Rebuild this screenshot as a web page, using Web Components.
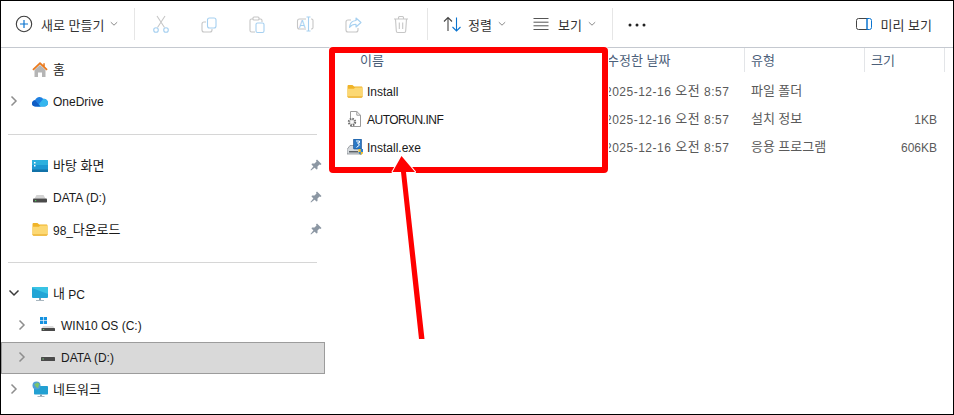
<!DOCTYPE html>
<html lang="ko">
<head>
<meta charset="utf-8">
<title>Explorer</title>
<style>
  html, body { margin: 0; padding: 0; background: #fff; }
  body { font: 12px "Liberation Sans", "Noto Sans CJK KR", sans-serif; color: #1a1a1a; }
</style>
</head>
<body>
<explorer-window>
  <explorer-toolbar slot="toolbar">
    <tool-button icon="plus" chevron style="width:133px;--pl:11px;--gap:5px"><ko-text>새로 만들기</ko-text></tool-button>
    <tool-sep style="margin-right:2px"></tool-sep>
    <tool-button icon="cut" style="--pl:12px;--pr:12px"></tool-button>
    <tool-button icon="copy" style="--pl:12px;--pr:12px"></tool-button>
    <tool-button icon="paste" style="--pl:12px;--pr:12px"></tool-button>
    <tool-button icon="rename" style="--pl:12px;--pr:12px"></tool-button>
    <tool-button icon="share" style="--pl:12px;--pr:12px"></tool-button>
    <tool-button icon="trash" style="--pl:12px;--pr:12px"></tool-button>
    <tool-sep style="margin-left:2px"></tool-sep>
    <tool-button icon="sort" chevron style="--pl:12px;--gap:4px"><ko-text>정렬</ko-text></tool-button>
    <tool-button icon="view" chevron style="--pl:23px;--pr:16px;--gap:5px"><ko-text>보기</ko-text></tool-button>
    <tool-sep></tool-sep>
    <tool-button icon="dots" style="--pl:12px"></tool-button>
    <tool-button icon="preview" style="margin-left:auto;--gap:9px;--pr:21px"><ko-text>미리 보기</ko-text></tool-button>
  </explorer-toolbar>

  <nav-pane slot="nav">
    <nav-item icon="home"><ko-text>홈</ko-text></nav-item>
    <nav-item icon="onedrive" arrow="right">OneDrive</nav-item>
    <nav-divider></nav-divider>
    <nav-item icon="desktop" pin><ko-text>바탕 화면</ko-text></nav-item>
    <nav-item icon="disk" pin>DATA (D:)</nav-item>
    <nav-item icon="folder" pin>98_<ko-text style="margin-left:-4px">다운로드</ko-text></nav-item>
    <nav-divider></nav-divider>
    <nav-item icon="pc" arrow="down"><ko-text>내</ko-text> PC</nav-item>
    <nav-item icon="windisk" arrow="right" level="1">WIN10 OS (C:)</nav-item>
    <nav-item icon="disk2" arrow="right" level="1" selected>DATA (D:)</nav-item>
    <nav-item icon="network" arrow="right"><ko-text>네트워크</ko-text></nav-item>
  </nav-pane>

  <file-list slot="files">
    <file-row icon="folder" name="Install" date="2025-12-16 오전 8:57" type="파일 폴더"></file-row>
    <file-row icon="inf" name="AUTORUN.INF" date="2025-12-16 오전 8:57" type="설치 정보" size="1KB" style="--track:-.5px"></file-row>
    <file-row icon="exe" name="Install.exe" date="2025-12-16 오전 8:57" type="응용 프로그램" size="606KB"></file-row>
  </file-list>

  <callout-mark slot="overlay"></callout-mark>
</explorer-window>

<script>
// every icon drawn on a 16 or 24 unit box
const svg16 = (body) => `<svg width="16" height="16" viewBox="0 0 16 16" fill="none">${body}</svg>`;
const svg24 = (body) => `<svg width="24" height="24" viewBox="0 0 24 24" fill="none">${body}</svg>`;
const G = '#c6c6c6';
const B = '#a6d0f0';

const FOLDER = `
  <path d="M.5 3.2c0-.7.5-1.2 1.2-1.2h3.7l1.8 1.6h7.1c.7 0 1.2.5 1.2 1.2v8.500c0 .7-.5 1.2-1.2 1.2H1.7c-.7 0-1.2-.5-1.2-1.2z" fill="#f0b429"/>
  <path d="M.5 5.8l6.3-.1 1.6-1.2h6c.7 0 1.1.5 1.1 1.1v7.900c0 .7-.5 1.2-1.2 1.2H1.7c-.7 0-1.2-.5-1.2-1.2z" fill="#fcd873"/>
  <path d="M.5 13.2h15v.3c0 .7-.5 1.2-1.2 1.2H1.7c-.7 0-1.2-.5-1.2-1.2z" fill="#edb63e"/>`;

const ICONS = {
  plus: svg24(`<circle cx="12" cy="12" r="7.700" stroke="#3c3c3c" stroke-width="1.100"/><path d="M12 8v8M8 12h8" stroke="#0a74d0" stroke-width="1.200"/>`),
  cut: svg24(`<path d="M8.500 15.500 16 4M15.500 15.500 8 4" stroke="${G}" stroke-width="1.100"/><circle cx="7" cy="18" r="2.300" stroke="${B}" stroke-width="1.100"/><circle cx="17" cy="18" r="2.300" stroke="${B}" stroke-width="1.100"/>`),
  copy: svg24(`<path d="M9 10H7a2 2 0 0 0-2 2v6a2 2 0 0 0 2 2h6a2 2 0 0 0 2-2v-1" stroke="${G}" stroke-width="1.100"/><rect x="10.500" y="6" width="8.500" height="10" rx="2" stroke="${B}" stroke-width="1.100"/>`),
  paste: svg24(`<path d="M8 7H6.500A1.500 1.500 0 0 0 5 8.500v10A1.500 1.500 0 0 0 6.500 20H10M14 7h1.500A1.500 1.500 0 0 1 17 8.500V10" stroke="${G}" stroke-width="1.100"/><rect x="8" y="5" width="6" height="3" rx="1" stroke="${G}" stroke-width="1.100"/><rect x="11" y="11" width="8" height="9.500" rx="1.500" stroke="${B}" stroke-width="1.100"/>`),
  rename: svg24(`<path d="M13 7H6.500A2 2 0 0 0 4.500 9v6a2 2 0 0 0 2 2H13M18 7h.5a1.500 1.500 0 0 1 1.500 1.500v7a1.500 1.500 0 0 1-1.500 1.500H18" stroke="${G}" stroke-width="1.100"/><path d="M15.500 5.500V18.500M13.500 5h4M13.500 19h4" stroke="${B}" stroke-width="1.100"/><text x="9" y="15.500" font-size="10" fill="${B}" text-anchor="middle" font-family="Liberation Sans">A</text>`),
  share: svg24(`<path d="M10 8H7a2 2 0 0 0-2 2v8a2 2 0 0 0 2 2h8a2 2 0 0 0 2-2v-2" stroke="${G}" stroke-width="1.100"/><path d="M15 6l5 4.500-5 4.500v-2.700c-3 0-5 1-6.500 3 .3-4 2.500-6.500 6.500-6.800z" stroke="${B}" stroke-width="1.100" stroke-linejoin="round"/>`),
  trash: svg24(`<path d="M5 7h14M9.500 7V5.500c0-.6.4-1 1-1h3c.6 0 1 .4 1 1V7M6.500 7l.8 12a1.500 1.500 0 0 0 1.500 1.500h6.400a1.500 1.500 0 0 0 1.500-1.500l.8-12M10.300 10.500v6.500M13.700 10.500v6.500" stroke="${G}" stroke-width="1.100"/>`),
  sort: svg24(`<path d="M8 19V5.500M4 9.500l4-4 4 4" stroke="#444" stroke-width="1.100"/><path d="M16.500 5.500V19M12.500 15l4 4 4-4" stroke="#0a74d0" stroke-width="1.100"/>`),
  view: svg24(`<path d="M4.500 6.500h15M4.500 10.200h15M4.500 13.800h15M4.500 17.500h15" stroke="#555" stroke-width="1"/>`),
  dots: svg24(`<circle cx="5" cy="13" r="1.500" fill="#222"/><circle cx="12" cy="13" r="1.500" fill="#222"/><circle cx="19" cy="13" r="1.500" fill="#222"/>`),
  preview: svg16(`<path d="M11 2.500H2.500a2 2 0 0 0-2 2v7a2 2 0 0 0 2 2H11" stroke="#444" stroke-width="1"/><path d="M11 2.500h2.500a2 2 0 0 1 2 2v7a2 2 0 0 1-2 2H11zM11 2.500v11" stroke="#0a74d0" stroke-width="1"/>`),

  home: svg16(`<g transform="translate(0 1)"><path d="M2.500 8 8 3l5.500 5v7H10v-4.500H6V15H2.500z" fill="#b5b5b5"/><path d="M8 0 .3 7.200l1.300 1.200L8 2.600l6.400 5.800 1.300-1.200L12.800 4.500V1.300h-1.500v1.800z" fill="#ea7a1e"/></g>`),
  onedrive: svg16(`<path d="M3.600 13.500C1.500 13.500 0 12.100 0 10.400 0 8.700 1.400 7.400 3 7.300 3.700 5.300 5.500 4 7.500 4c1.500 0 2.800.7 3.600 1.900 2.700-.3 4.900 1.600 4.900 4 0 2-1.600 3.600-3.700 3.600z" fill="#1f7fe0"/><path d="M5 13.500 11.100 5.900c2.700-.3 4.900 1.600 4.900 4 0 2-1.600 3.600-3.700 3.600z" fill="#35b6ee"/><path d="M0 10.400C0 12.100 1.500 13.500 3.600 13.500h5L5 9.500 3 7.300C1.400 7.400 0 8.700 0 10.400z" fill="#0f5cc4"/>`),
  desktop: svg16(`<rect y="3" width="16" height="12" rx="1" fill="#1c97d2"/><rect y="3" width="16" height="5" fill="#2cb0de"/><rect y="12.500" width="16" height="2.500" fill="#1172a8"/><rect x="2" y="5" width="1.500" height="1.500" fill="#fff"/><rect x="2" y="8" width="1.500" height="1.500" fill="#fff"/>`),
  disk: svg16(`<path d="M2.500 9.500 4.500 6h7l2 3.500z" fill="#d3d3d3"/><rect x="1" y="9.500" width="14" height="4" rx=".8" fill="#4a4a4a"/><rect x="3" y="11" width="1.200" height="1.200" fill="#4fd05a"/>`),
  disk2: svg16(`<path d="M2.500 8 5 6h6l2.500 2z" fill="#e2e2e2"/><rect x="1" y="8" width="14" height="4" rx=".6" fill="#4a4a4a"/><rect x="2.500" y="9.400" width="1.200" height="1.200" fill="#7fd07f"/>`),
  folder: svg16(FOLDER),
  pc: svg16(`<rect y="2" width="16" height="11" rx="1" fill="#22a5d6"/><path d="M0 3a1 1 0 0 1 1-1h14a1 1 0 0 1 1 1v6z" fill="#38c3e4"/><rect x="7" y="13" width="2" height="2" fill="#8aa0ad"/><rect x="4" y="15" width="8" height="1" fill="#a9b7c0"/>`),
  windisk: svg16(`<rect x="0" y="0" width="3.200" height="3.200" fill="#1592e0"/><rect x="3.800" y="0" width="3.200" height="3.200" fill="#1592e0"/><rect x="0" y="3.800" width="3.200" height="3.200" fill="#1592e0"/><rect x="3.800" y="3.800" width="3.200" height="3.200" fill="#1592e0"/><path d="M3 9h10l1.500 2H2z" fill="#dcdcdc"/><rect x="1.500" y="11" width="13.500" height="3" rx=".6" fill="#4a4a4a"/><rect x="3" y="12" width="1.200" height="1" fill="#6fd06f"/>`),
  network: svg16(`<rect x="2" y="5" width="14" height="8.500" rx=".8" fill="#22a0d2"/><rect x="8" y="13.500" width="2" height="1.500" fill="#8aa0ad"/><rect x="5.500" y="15" width="7" height="1" fill="#a9b7c0"/><circle cx="4.500" cy="4.500" r="4" fill="#4f9fd8"/><path d="M2 2.500c1.500.5 2.500 0 3-1.300 1 .8 2.300 1.500 3 1.800-1 .7-1.500 2-1.800 4-1.500-.2-3-1.500-4.200-4.500z" fill="#7cc46c"/>`),

  inf: svg16(`<path d="M3.500.5h6.300l3.700 3.700v11.300h-10z" fill="#fff" stroke="#9a9a9a"/><path d="M9.800.5v3.700h3.700" stroke="#9a9a9a"/><circle cx="5" cy="11" r="3.200" fill="#e6e6e6" stroke="#6f6f6f" stroke-width="2" stroke-dasharray="1.500 1"/><circle cx="5" cy="11" r="1.100" fill="#fff"/>`),
  exe: svg16(`<path d="M0 10.500 3 6.500h9l3 4v4.500H0z" fill="#d6dade" stroke="#7d8388" stroke-width=".7"/><rect x="2" y="12" width="9" height="1.500" fill="#5c6267"/><rect x="6.500" y="0" width="8" height="10" rx=".6" fill="#2b78c4" stroke="#174f8f" stroke-width=".6"/><path d="M9 2h3.500v1.800h-2l2 2.300L9.500 8.500" stroke="#fff" stroke-width="1"/><path d="M11.500 10h4.500v3.200c0 1.200-1.200 2.100-2.250 2.600-1-.5-2.250-1.400-2.250-2.600z" fill="#f5c021"/><path d="M13.750 10H16v3H13.750zM11.500 13h2.250v2.800c-1-.5-2.250-1.400-2.250-2.800z" fill="#2c7fd4"/>`)
};

const CHEVRON_DOWN = `<svg width="8" height="6" viewBox="0 0 8 6" fill="none"><path d="M.8 1.200 4 4.200l3.200-3" stroke="#8a8a8a" stroke-width="1"/></svg>`;
const HANGUL = /[가-힣]+/g;
const ko = (str) => str.replace(HANGUL, (m) => `<ko-text>${m}</ko-text>`);

// hangul run: the CJK font is set a size up to get the 12px advance of the original
class KoText extends HTMLElement {
  constructor() {
    super();
    this.attachShadow({ mode: 'open' }).innerHTML = `
      <style>
        :host { font: 13px/1 "Noto Sans CJK KR", sans-serif; vertical-align: 1px; }
      </style>
      <slot></slot>`;
  }
}

class ExplorerWindow extends HTMLElement {
  constructor() {
    super();
    this.attachShadow({ mode: 'open' }).innerHTML = `
      <style>
        :host {
          display: block;
          position: relative;
          box-sizing: border-box;
          width: 954px;
          height: 415px;
          border: 1px solid #000;
          background: #fff;
          overflow: hidden;
        }
        .body { display: grid; grid-template-columns: 324px 1fr; height: 367px; }
      </style>
      <slot name="toolbar"></slot>
      <div class="body">
        <slot name="nav"></slot>
        <slot name="files"></slot>
      </div>
      <slot name="overlay"></slot>`;
  }
}

class ExplorerToolbar extends HTMLElement {
  constructor() {
    super();
    this.attachShadow({ mode: 'open' }).innerHTML = `
      <style>
        :host {
          display: flex;
          align-items: center;
          box-sizing: border-box;
          height: 47px;
          border-bottom: 1px solid #c5c9d0;
        }
      </style>
      <slot></slot>`;
  }
}

class ToolButton extends HTMLElement {
  constructor() {
    super();
    const chev = this.hasAttribute('chevron') ? `<span class="chev">${CHEVRON_DOWN}</span>` : '';
    this.attachShadow({ mode: 'open' }).innerHTML = `
      <style>
        :host {
          display: flex;
          align-items: center;
          box-sizing: border-box;
          height: 46px;
          padding: 0 var(--pr, 0) 0 var(--pl, 0);
          color: #333;
          white-space: nowrap;
        }
        .ico { display: flex; }
        .label { margin-left: var(--gap, 0); padding-top: 4px; line-height: 16px; }
        .chev { display: flex; margin-left: 6px; }
      </style>
      <span class="ico">${ICONS[this.getAttribute('icon')]}</span>
      <span class="label"><slot></slot></span>
      ${chev}`;
  }
}

class ToolSep extends HTMLElement {
  constructor() {
    super();
    this.attachShadow({ mode: 'open' }).innerHTML = `
      <style>
        :host { display: block; flex: none; width: 1px; height: 32px; background: #e6e6e6; }
      </style>`;
  }
}

class NavPane extends HTMLElement {
  constructor() {
    super();
    this.attachShadow({ mode: 'open' }).innerHTML = `
      <style>
        :host { display: flex; flex-direction: column; padding-top: 5px; }
      </style>
      <slot></slot>`;
  }
}

class NavDivider extends HTMLElement {
  constructor() {
    super();
    this.attachShadow({ mode: 'open' }).innerHTML = `
      <style>
        :host { display: block; height: 32px; box-sizing: border-box; padding: 17px 8px 0 7px; }
        div { height: 1px; background: #d6d6d6; }
      </style>
      <div></div>`;
  }
}

class NavItem extends HTMLElement {
  constructor() {
    super();
    const arrow = this.getAttribute('arrow');
    const level = Number(this.getAttribute('level') || 0);
    let chev = '';
    if (arrow === 'right') {
      chev = `<svg width="8" height="12" viewBox="0 0 8 12" fill="none"><path d="M1.500 1.500 6 6l-4.500 4.500" stroke="#8e8e8e" stroke-width="1.500"/></svg>`;
    } else if (arrow === 'down') {
      chev = `<svg width="12" height="8" viewBox="0 0 12 8" fill="none"><path d="M1.500 1.500 6 6l4.500-4.500" stroke="#3a3a3a" stroke-width="1.500"/></svg>`;
    }
    const pin = this.hasAttribute('pin')
      ? `<svg class="pin" width="12" height="12" viewBox="0 0 12 12"><path d="M7 .5 11.500 5 10.500 6 9.500 5.500 7.500 7.500 7.500 10 6.500 10.500 1.500 5.500 2 4.500 4.500 4.500 6.500 2.500 6 1.500zM3.500 7.200 4.800 8.500 1 11.500.5 11z" fill="#8c97a3"/></svg>`
      : '';
    this.attachShadow({ mode: 'open' }).innerHTML = `
      <style>
        :host {
          display: flex;
          align-items: center;
          box-sizing: border-box;
          height: 32px;
          padding-left: ${5 + level * 8}px;
          font: 12px "Liberation Sans", "Noto Sans CJK KR", sans-serif;
          color: #1a1a1a;
          white-space: nowrap;
        }
        :host([selected]) {
          background: #d9d9d9;
          outline: 1px solid #9c9c9c;
          outline-offset: -1px;
          margin: 1px 0 -1px;
          padding-bottom: 2px;
        }
        .chev { width: 16px; display: flex; justify-content: center; }
        .ico { display: flex; margin-left: 10px; margin-right: 5px; }
        .text { flex: 1; padding-top: 2px; line-height: 16px; }
        .pin { margin-right: 3px; }
      </style>
      <span class="chev">${chev}</span>
      <span class="ico">${ICONS[this.getAttribute('icon')]}</span>
      <span class="text"><slot></slot></span>
      ${pin}`;
  }
}

const COLUMNS = 'grid-template-columns: 273px 146px 120px 80px 10px;';

class FileList extends HTMLElement {
  constructor() {
    super();
    this.attachShadow({ mode: 'open' }).innerHTML = `
      <style>
        :host { display: block; }
        .head {
          display: grid;
          ${COLUMNS}
          height: 24px;
          margin-bottom: 5px;
          color: #4c607a;
        }
        .head span { display: flex; align-items: center; padding-left: 7px; padding-bottom: 1px; border-right: 1px solid #e3e5e8; margin-right: -1px; }
        .head span:first-child { padding-left: 35px; border-right: 0; }
        .head span:nth-child(2) { padding-left: 9px; }
      </style>
      <div class="head">
        <span><ko-text>이름</ko-text></span><span><ko-text>수정한 날짜</ko-text></span><span><ko-text>유형</ko-text></span><span><ko-text>크기</ko-text></span>
      </div>
      <slot></slot>`;
  }
}

class FileRow extends HTMLElement {
  constructor() {
    super();
    const attr = (n) => this.getAttribute(n) || '';
    this.attachShadow({ mode: 'open' }).innerHTML = `
      <style>
        :host {
          display: grid;
          ${COLUMNS}
          align-items: center;
          height: 28px;
          font: 12px/16px "Liberation Sans", "Noto Sans CJK KR", sans-serif;
          color: #5a5a5a;
          white-space: nowrap;
        }
        .name { display: flex; align-items: center; gap: 4px; padding-left: 22px; color: #1a1a1a; letter-spacing: var(--track, 0); }
        .ico { display: flex; }
        .label, .size { padding-top: 2px; }
        .date, .type { padding-left: 7px; }
        .date { letter-spacing: .5px; }
        .size { text-align: right; padding-right: 7px; }
      </style>
      <span class="name"><span class="ico">${ICONS[attr('icon')]}</span><span class="label">${attr('name')}</span></span>
      <span class="date">${ko(attr('date'))}</span>
      <span class="type">${ko(attr('type'))}</span>
      <span class="size">${attr('size')}</span>`;
  }
}

// the red annotation painted over the screenshot: box and arrow
class CalloutMark extends HTMLElement {
  constructor() {
    super();
    this.attachShadow({ mode: 'open' }).innerHTML = `
      <style>
        :host { position: absolute; left: -1px; top: -1px; width: 954px; height: 415px; pointer-events: none; }
        svg { display: block; }
      </style>
      <svg width="954" height="415" viewBox="0 0 954 415">
        <rect x="332" y="50" width="273" height="120" rx="1" fill="none" stroke="#fff" stroke-width="8"/>
        <rect x="332" y="50" width="273" height="120" rx="1" fill="none" stroke="#f00" stroke-width="6"/>
        <polygon points="401.500,156 415,172 406,172 424.500,339 419,339 401,172 392.500,172" fill="#f00" stroke="#fff" stroke-width="2" stroke-linejoin="round" paint-order="stroke"/>
      </svg>`;
  }
}

customElements.define('ko-text', KoText);
customElements.define('explorer-window', ExplorerWindow);
customElements.define('explorer-toolbar', ExplorerToolbar);
customElements.define('tool-button', ToolButton);
customElements.define('tool-sep', ToolSep);
customElements.define('nav-pane', NavPane);
customElements.define('nav-divider', NavDivider);
customElements.define('nav-item', NavItem);
customElements.define('file-list', FileList);
customElements.define('file-row', FileRow);
customElements.define('callout-mark', CalloutMark);
</script>
</body>
</html>
